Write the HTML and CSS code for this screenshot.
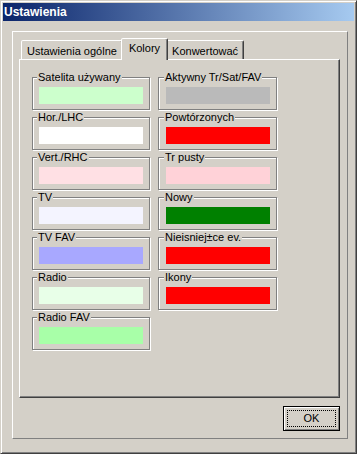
FILE: index.html
```html
<!DOCTYPE html>
<html lang="pl">
<head>
  <meta charset="UTF-8">
  <meta name="viewport" content="width=device-width, initial-scale=1.0">
  <title>Ustawienia</title>
  <link rel="stylesheet" href="styles.css">
</head>
<body>
  <div class="window">
    <div class="titlebar">Ustawienia</div>
    <div class="frame">
      <div class="tabs">
        <div class="tab">Ustawienia ogólne</div>
        <div class="tab active">Kolory</div>
        <div class="tab">Konwertować</div>
      </div>
      <div class="page">
        <div class="col">
          <div class="group">
            <span class="label">Satelita używany</span>
            <div class="swatch" style="background-color: #ccffcc;"></div>
          </div>
          <div class="group">
            <span class="label">Hor./LHC</span>
            <div class="swatch" style="background-color: #ffffff;"></div>
          </div>
          <div class="group">
            <span class="label">Vert./RHC</span>
            <div class="swatch" style="background-color: #ffe0e4;"></div>
          </div>
          <div class="group">
            <span class="label">TV</span>
            <div class="swatch" style="background-color: #f4f4ff;"></div>
          </div>
          <div class="group">
            <span class="label">TV FAV</span>
            <div class="swatch" style="background-color: #a8a8ff;"></div>
          </div>
          <div class="group">
            <span class="label">Radio</span>
            <div class="swatch" style="background-color: #e8ffe8;"></div>
          </div>
          <div class="group">
            <span class="label">Radio FAV</span>
            <div class="swatch" style="background-color: #a8ffa8;"></div>
          </div>
        </div>
        <div class="col col-right">
          <div class="group">
            <span class="label">Aktywny Tr/Sat/FAV</span>
            <div class="swatch" style="background-color: #bababa;"></div>
          </div>
          <div class="group">
            <span class="label">Powtórzonych</span>
            <div class="swatch" style="background-color: #ff0000;"></div>
          </div>
          <div class="group">
            <span class="label">Tr pusty</span>
            <div class="swatch" style="background-color: #ffd2d8;"></div>
          </div>
          <div class="group">
            <span class="label">Nowy</span>
            <div class="swatch" style="background-color: #008000;"></div>
          </div>
          <div class="group">
            <span class="label">Nieisniej±ce ev.</span>
            <div class="swatch" style="background-color: #ff0000;"></div>
          </div>
          <div class="group">
            <span class="label">Ikony</span>
            <div class="swatch" style="background-color: #ff0000;"></div>
          </div>
        </div>
      </div>
      <div class="actions">
        <button class="btn default"><span class="btn-focus">OK</span></button>
      </div>
    </div>
  </div>
</body>
</html>
```

FILE: styles.css
```css
* {
  box-sizing: border-box;
}
body {
  margin: 0;
  font-family: "Liberation Sans", Arial, sans-serif;
  font-size: 11px;
  color: #000;
  background: #d4d0c8;
}
.window {
  width: 357px;
  height: 454px;
  padding: 2px;
  background: #d4d0c8;
  border: 1px solid;
  border-color: #d4d0c8 #404040 #404040 #d4d0c8;
  box-shadow: inset 1px 1px #fff, inset -1px -1px #808080;
}
.titlebar {
  height: 18px;
  line-height: 18px;
  padding-left: 1px;
  font-size: 12px;
  font-weight: bold;
  color: #fff;
  background: linear-gradient(to right, #0a246a, #a6caf0);
}
.frame {
  width: 336px;
  height: 408px;
  margin: 10px 0 0 9px;
  padding: 6px 0 0 6px;
  border: 1px solid;
  border-color: #fff #808080 #808080 #fff;
}

/* tab strip */
.tabs {
  display: flex;
  align-items: flex-end;
  height: 21px;
  padding-left: 2px;
}
.tab {
  height: 19px;
  padding: 2px 5px 0;
  line-height: 16px;
  white-space: nowrap;
  border: 1px solid;
  border-bottom: 0;
  border-color: #fff #404040 transparent #fff;
  border-radius: 2px 2px 0 0;
  box-shadow: inset -1px 0 #808080;
  background: #d4d0c8;
}
.tab.active {
  position: relative;
  z-index: 1;
  height: 22px;
  margin: 0 -2px -1px;
  padding: 1px 7px 0;
}
.page {
  display: flex;
  align-items: flex-start;
  gap: 8px;
  width: 321px;
  height: 339px;
  padding: 17px 0 0 12px;
  border: 1px solid;
  border-color: #fff #404040 #404040 #fff;
  box-shadow: inset -1px -1px #808080;
}

/* colour groups */
.col {
  display: flex;
  flex-direction: column;
  gap: 7px;
}
.group {
  display: flex;
  flex-direction: column;
  align-items: flex-start;
  width: 118px;
  height: 33px;
  padding: 0 6px;
  border: 1px solid #808080;
  box-shadow: inset 1px 1px #fff, 1px 1px #fff;
}
.col-right .group {
  width: 119px;
  padding-left: 7px;
}
.label {
  margin: -7px 0 0 -2px;
  padding: 0 1px;
  line-height: 13px;
  white-space: nowrap;
  background: #d4d0c8;
}
.swatch {
  width: 104px;
  height: 17px;
  margin-top: 3px;
}

/* buttons */
.actions {
  display: flex;
  justify-content: flex-end;
  width: 321px;
  margin-top: 8px;
}
.btn {
  width: 57px;
  height: 25px;
  padding: 3px;
  font: inherit;
  color: #000;
  background: #d4d0c8;
  border: 1px solid #000;
  box-shadow: inset 1px 1px #fff, inset -1px -1px #808080;
}
.btn-focus {
  display: block;
  height: 100%;
  line-height: 15px;
  border: 1px dotted #000;
}
```
